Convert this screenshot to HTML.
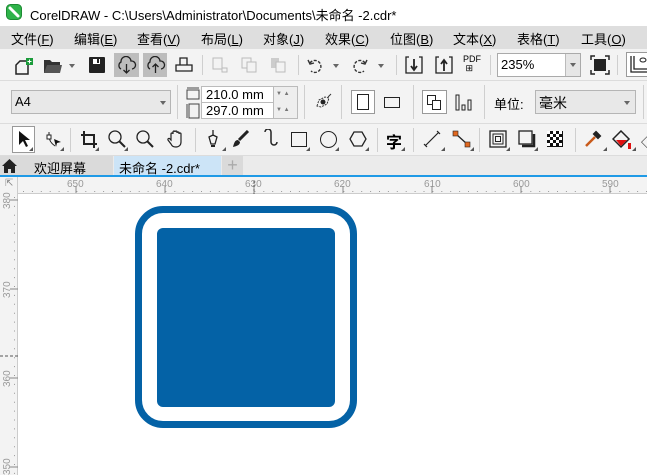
<!DOCTYPE html>
<html><head><meta charset="utf-8"><style>
*{margin:0;padding:0;box-sizing:border-box}
body{width:647px;height:475px;overflow:hidden;background:#fff;font-family:"Liberation Sans","Noto Sans CJK SC",sans-serif;font-size:12px;color:#000;position:relative}
.a{position:absolute}
.sep{position:absolute;width:1px;background:#cfcfcf}
.hl{position:absolute;height:1px;background:#dcdcdc;left:0;width:647px}
.ic{position:absolute;font-size:16px;line-height:16px}
.tri{position:absolute;width:0;height:0;border-left:3px solid transparent;border-right:3px solid transparent;border-top:4px solid #666}
.sm{position:absolute;width:0;height:0;border-left:4px solid transparent;border-bottom:4px solid #555}
</style></head><body>
<!-- title -->
<div class="a" style="left:0;top:0;width:647px;height:26px;background:#fff"></div>
<svg class="a" style="left:6px;top:4px" width="16" height="16"><rect x="0.5" y="0.5" width="15" height="15" rx="4" fill="#2fb34a" stroke="#1d8a33"/><path d="M4 4 L12 12" stroke="#fff" stroke-width="3" stroke-linecap="round"/></svg>
<div class="a" style="left:30px;top:5px;font-size:13px">CorelDRAW - C:\Users\Administrator\Documents\未命名 -2.cdr*</div>
<!-- menu -->
<div class="a" style="left:0;top:26px;width:647px;height:23px;background:#dedede"></div>
<div class="a" style="top:29px;left:11px;font-size:13px;word-spacing:0">文件(<u>F</u>)</div>
<div class="a" style="top:29px;left:74px;font-size:13px">编辑(<u>E</u>)</div>
<div class="a" style="top:29px;left:137px;font-size:13px">查看(<u>V</u>)</div>
<div class="a" style="top:29px;left:201px;font-size:13px">布局(<u>L</u>)</div>
<div class="a" style="top:29px;left:263px;font-size:13px">对象(<u>J</u>)</div>
<div class="a" style="top:29px;left:325px;font-size:13px">效果(<u>C</u>)</div>
<div class="a" style="top:29px;left:390px;font-size:13px">位图(<u>B</u>)</div>
<div class="a" style="top:29px;left:453px;font-size:13px">文本(<u>X</u>)</div>
<div class="a" style="top:29px;left:517px;font-size:13px">表格(<u>T</u>)</div>
<div class="a" style="top:29px;left:581px;font-size:13px">工具(<u>O</u>)</div>
<!-- toolbars bg -->
<div class="a" style="left:0;top:49px;width:647px;height:107px;background:#f3f3f3"></div>
<div class="hl" style="top:80px"></div>
<div class="hl" style="top:123px"></div>
<div class="hl" style="top:155px"></div>
<!-- toolbar 1 -->
<svg class="a" style="left:14px;top:56px" width="20" height="20"><path d="M6 5 L14 5 L14 18 L2 18 L2 9 Z" fill="none" stroke="#222" stroke-width="1.5"/><rect x="12" y="2" width="7" height="7" fill="#1a9b3a"/><path d="M15.5 3.5v4M13.5 5.5h4" stroke="#fff"/></svg>
<svg class="a" style="left:43px;top:57px" width="20" height="18"><path d="M1 3h6l2 2h8v11H1z" fill="#333"/><path d="M4 8h15l-2 8H1z" fill="#555"/></svg>
<div class="tri" style="left:69px;top:64px"></div>
<svg class="a" style="left:88px;top:56px" width="18" height="18"><rect x="1" y="1" width="16" height="16" rx="1" fill="#222"/><rect x="5" y="3" width="7" height="5" fill="#fff"/><rect x="9" y="3" width="2" height="4" fill="#222"/></svg>
<div class="a" style="left:114px;top:53px;width:25px;height:24px;background:#bdbdbd"></div>
<div class="a" style="left:143px;top:53px;width:24px;height:24px;background:#bdbdbd"></div>
<svg class="a" style="left:116px;top:56px" width="21" height="18"><path d="M5 13 A4 4 0 0 1 5 6 A5 5 0 0 1 15 5 A4 4 0 0 1 16 13" fill="none" stroke="#222" stroke-width="1.3"/><path d="M10.5 8v9M7.5 14l3 3 3-3" fill="none" stroke="#222" stroke-width="1.3"/></svg>
<svg class="a" style="left:145px;top:56px" width="21" height="18"><path d="M5 13 A4 4 0 0 1 5 6 A5 5 0 0 1 15 5 A4 4 0 0 1 16 13" fill="none" stroke="#222" stroke-width="1.3"/><path d="M10.5 17v-9M7.5 11l3-3 3 3" fill="none" stroke="#222" stroke-width="1.3"/></svg>
<svg class="a" style="left:175px;top:56px" width="18" height="18"><path d="M5 9V2h7v7M1 9h16v6H1z" fill="none" stroke="#222" stroke-width="1.3"/></svg>
<div class="sep" style="left:202px;top:55px;height:20px"></div>
<svg class="a" style="left:212px;top:57px" width="16" height="16"><rect x="1" y="1" width="9" height="11" fill="none" stroke="#bbb"/><rect x="10" y="11" width="5" height="4" fill="none" stroke="#bbb"/></svg>
<svg class="a" style="left:241px;top:57px" width="16" height="16"><rect x="1" y="1" width="9" height="10" fill="none" stroke="#bbb"/><rect x="6" y="5" width="9" height="10" fill="#f3f3f3" stroke="#bbb"/></svg>
<svg class="a" style="left:270px;top:57px" width="16" height="16"><rect x="1" y="1" width="8" height="10" fill="#ccc"/><rect x="6" y="5" width="9" height="10" fill="#f3f3f3" stroke="#bbb"/></svg>
<div class="sep" style="left:298px;top:55px;height:20px"></div>
<svg class="a" style="left:306px;top:57px" width="18" height="18"><path d="M4 6 A6 6 0 1 1 5 14" fill="none" stroke="#333" stroke-width="1.4" stroke-dasharray="3 1.5"/><path d="M2 3 L4 7 L8 6" fill="none" stroke="#333" stroke-width="1.4"/></svg>
<div class="tri" style="left:333px;top:64px"></div>
<svg class="a" style="left:351px;top:57px" width="18" height="18"><path d="M14 6 A6 6 0 1 0 13 14" fill="none" stroke="#333" stroke-width="1.4" stroke-dasharray="3 1.5"/><path d="M16 3 L14 7 L10 6" fill="none" stroke="#333" stroke-width="1.4"/></svg>
<div class="tri" style="left:378px;top:64px"></div>
<div class="sep" style="left:396px;top:55px;height:20px"></div>
<svg class="a" style="left:405px;top:56px" width="18" height="18"><path d="M4 1H1v16h16V1h-3" fill="none" stroke="#222" stroke-width="1.3"/><path d="M9 3v10M6 10l3 4 3-4" fill="none" stroke="#222" stroke-width="1.8"/></svg>
<svg class="a" style="left:435px;top:56px" width="18" height="18"><path d="M4 1H1v16h16V1h-3" fill="none" stroke="#222" stroke-width="1.3"/><path d="M9 15V5M6 8l3-4 3 4" fill="none" stroke="#222" stroke-width="1.8"/></svg>
<div class="a" style="left:463px;top:55px;font-size:9px;line-height:9px">PDF<br>&nbsp;⊞</div>
<div class="sep" style="left:490px;top:55px;height:20px"></div>
<div class="a" style="left:497px;top:53px;width:84px;height:24px;border:1px solid #aaa;background:#fff"></div>
<div class="a" style="left:565px;top:54px;width:15px;height:22px;background:#e6e6e6;border-left:1px solid #bbb"></div>
<div class="tri" style="left:570px;top:63px"></div>
<div class="a" style="left:501px;top:57px;font-size:13px">235%</div>
<svg class="a" style="left:590px;top:55px" width="20" height="20"><path d="M1 5V1h4M15 1h4v4M19 15v4h-4M5 19H1v-4" fill="none" stroke="#222" stroke-width="1.5"/><rect x="4" y="4" width="12" height="12" fill="#222"/></svg>
<div class="sep" style="left:617px;top:55px;height:20px"></div>
<div class="a" style="left:626px;top:52px;width:25px;height:25px;border:1px solid #999;background:#fff"></div>
<svg class="a" style="left:629px;top:55px" width="18" height="18"><path d="M2 1v16h16M5 1v13h13" fill="none" stroke="#222" stroke-width="1.3"/><ellipse cx="14" cy="5" rx="3" ry="2" fill="none" stroke="#222"/></svg>
<!-- toolbar 2 -->
<div class="a" style="left:11px;top:90px;width:160px;height:24px;border:1px solid #b5b5b5;background:#e8e8e8"></div>
<div class="a" style="left:15px;top:94px;font-size:13px">A4</div>
<div class="tri" style="left:160px;top:101px"></div>
<div class="sep" style="left:177px;top:85px;height:34px"></div>
<svg class="a" style="left:186px;top:87px" width="14" height="32"><path d="M1 1h12M1 3h12v9H1z" fill="none" stroke="#444"/><path d="M1 17v14M3 17h10v14H3z" fill="none" stroke="#444"/></svg>
<div class="a" style="left:201px;top:86px;width:73px;height:17px;border:1px solid #bbb;background:#fff;font-size:13px;padding-left:4px;line-height:15px">210.0 mm</div>
<div class="a" style="left:201px;top:102px;width:73px;height:17px;border:1px solid #bbb;background:#fff;font-size:13px;padding-left:4px;line-height:15px">297.0 mm</div>
<div class="a" style="left:273px;top:86px;width:25px;height:33px;border:1px solid #bbb;background:#eee"></div>
<div class="a" style="left:276px;top:91px;font-size:6px;color:#777">▼ ▲</div>
<div class="a" style="left:276px;top:107px;font-size:6px;color:#777">▼ ▲</div>
<div class="sep" style="left:304px;top:85px;height:34px"></div>
<svg class="a" style="left:314px;top:93px" width="18" height="18"><path d="M3 13L5 7 11 4 15 5 13 11 7 14z" fill="none" stroke="#333" stroke-dasharray="2 1"/><circle cx="9" cy="9" r="2.5" fill="#222"/><path d="M14 4l3-3" stroke="#333"/></svg>
<div class="sep" style="left:341px;top:85px;height:34px"></div>
<div class="a" style="left:351px;top:90px;width:24px;height:24px;border:1px solid #999;background:#fff"></div>
<div class="a" style="left:357px;top:94px;width:12px;height:16px;border:1.3px solid #222"></div>
<div class="a" style="left:384px;top:97px;width:16px;height:11px;border:1.3px solid #222"></div>
<div class="sep" style="left:413px;top:85px;height:34px"></div>
<div class="a" style="left:422px;top:90px;width:25px;height:24px;border:1px solid #999;background:#fff"></div>
<div class="a" style="left:427px;top:95px;width:9px;height:10px;border:1.2px solid #222"></div>
<div class="a" style="left:432px;top:100px;width:9px;height:10px;border:1.2px solid #222;background:#fff"></div>
<svg class="a" style="left:455px;top:94px" width="18" height="18"><rect x="1" y="1" width="3" height="15" fill="none" stroke="#222"/><rect x="7" y="11" width="3" height="5" fill="none" stroke="#222"/><rect x="13" y="6" width="3" height="10" fill="none" stroke="#222"/></svg>
<div class="sep" style="left:484px;top:85px;height:34px"></div>
<div class="a" style="left:494px;top:94px;font-size:13px">单位:</div>
<div class="a" style="left:535px;top:90px;width:101px;height:24px;border:1px solid #b5b5b5;background:#e8e8e8"></div>
<div class="a" style="left:539px;top:93px;font-size:14px">毫米</div>
<div class="tri" style="left:624px;top:101px"></div>
<div class="sep" style="left:643px;top:85px;height:34px"></div>
<!-- toolbox -->
<div class="a" style="left:12px;top:126px;width:23px;height:27px;border:1px solid #999;background:#fff"></div>
<svg class="a" style="left:17px;top:130px" width="14" height="18"><path d="M2 1v14l4-4 3 6 2-1-3-6h5z" fill="#111"/></svg>
<svg class="a" style="left:45px;top:130px" width="18" height="18"><path d="M4 2v4M4 6c0 5 3 8 6 10" fill="none" stroke="#222"/><rect x="2" y="5" width="4" height="4" fill="#fff" stroke="#222"/><path d="M9 9l7 3-4 1-1 4z" fill="#111"/></svg>
<div class="sep" style="left:70px;top:128px;height:24px"></div>
<svg class="a" style="left:80px;top:130px" width="18" height="18"><path d="M4 1v13h13M1 5h13v13" fill="none" stroke="#222" stroke-width="2"/></svg>
<svg class="a" style="left:108px;top:130px" width="18" height="18"><circle cx="7" cy="7" r="6" fill="none" stroke="#222" stroke-width="1.3"/><path d="M11 11l6 6" stroke="#222" stroke-width="2"/></svg>
<svg class="a" style="left:136px;top:130px" width="18" height="18"><circle cx="7" cy="7" r="6" fill="none" stroke="#222" stroke-width="1.3"/><path d="M11 11l6 6" stroke="#222" stroke-width="2"/></svg>
<svg class="a" style="left:166px;top:129px" width="20" height="20"><path d="M5 11V5a1 1 0 0 1 2 0V3a1 1 0 0 1 2 0v0a1 1 0 0 1 2 0v1a1 1 0 0 1 2 0v1a1 1 0 0 1 2 0v8c0 3-2 5-5 5s-4-1-5-3l-3-4a1 1 0 0 1 2-1z" fill="none" stroke="#222" stroke-width="1.2"/></svg>
<div class="sep" style="left:195px;top:128px;height:24px"></div>
<svg class="a" style="left:205px;top:129px" width="16" height="20"><path d="M8 1v6M4 8l4-2 4 2-2 7H6z" fill="none" stroke="#222" stroke-width="1.3"/><path d="M6 16h4v2H6z" fill="#222"/></svg>
<svg class="a" style="left:232px;top:130px" width="18" height="18"><path d="M16 1L7 10" stroke="#222" stroke-width="3"/><path d="M6 10c-3 0-4 3-5 7 4-1 7-2 7-5z" fill="#222"/></svg>
<svg class="a" style="left:262px;top:129px" width="16" height="20"><path d="M3 3a3 3 0 0 1 6 0v10a3 3 0 0 0 6 0" fill="none" stroke="#222" stroke-width="1.5"/></svg>
<div class="a" style="left:291px;top:132px;width:16px;height:15px;border:1.3px solid #222"></div>
<div class="a" style="left:320px;top:131px;width:17px;height:17px;border:1.3px solid #222;border-radius:50%"></div>
<svg class="a" style="left:349px;top:130px" width="18" height="18"><path d="M5 2h8l4 7-4 7H5L1 9z" fill="none" stroke="#222" stroke-width="1.3"/></svg>
<div class="sep" style="left:377px;top:128px;height:24px"></div>
<div class="a" style="left:386px;top:129px;font-size:16px;font-weight:bold">字</div>
<div class="sep" style="left:413px;top:128px;height:24px"></div>
<svg class="a" style="left:423px;top:130px" width="18" height="18"><path d="M2 16L16 2M1 14l3 3M14 1l3 3" stroke="#222" stroke-width="1.2"/></svg>
<svg class="a" style="left:452px;top:130px" width="20" height="20"><path d="M4 4l11 10" stroke="#222" stroke-width="1.3"/><rect x="1" y="1" width="5" height="5" fill="#e0681f" stroke="#222" stroke-width=".6"/><rect x="13" y="12" width="5" height="5" fill="#e0681f" stroke="#222" stroke-width=".6"/></svg>
<div class="sep" style="left:479px;top:128px;height:24px"></div>
<svg class="a" style="left:489px;top:130px" width="18" height="18"><rect x="1" y="1" width="16" height="16" fill="none" stroke="#222" stroke-width="1.3"/><rect x="4" y="4" width="10" height="10" fill="none" stroke="#222"/><rect x="6.5" y="6.5" width="5" height="5" fill="none" stroke="#222"/></svg>
<svg class="a" style="left:518px;top:130px" width="18" height="18"><rect x="1" y="1" width="13" height="13" fill="none" stroke="#222" stroke-width="1.3"/><path d="M16 4v12H4" fill="none" stroke="#222" stroke-width="2.5"/></svg>
<svg class="a" style="left:547px;top:131px" width="16" height="16"><rect width="16" height="16" fill="#111"/><g fill="#fff"><rect x="0" y="0" width="3" height="3"/><rect x="6" y="0" width="3" height="3"/><rect x="12" y="0" width="3" height="3"/><rect x="3" y="3" width="3" height="3"/><rect x="9" y="3" width="3" height="3"/><rect x="0" y="6" width="3" height="3"/><rect x="6" y="6" width="3" height="3"/><rect x="12" y="6" width="3" height="3"/><rect x="3" y="9" width="3" height="3"/><rect x="9" y="9" width="3" height="3"/><rect x="0" y="12" width="3" height="3"/><rect x="6" y="12" width="3" height="3"/><rect x="12" y="12" width="3" height="3"/></g></svg>
<div class="sep" style="left:575px;top:128px;height:24px"></div>
<svg class="a" style="left:584px;top:130px" width="18" height="18"><path d="M2 16l9-9" stroke="#c85a1a" stroke-width="2.5"/><path d="M10 4l4 4M12 2l4 4-2 2-4-4z" stroke="#222" stroke-width="2" fill="#222"/></svg>
<svg class="a" style="left:612px;top:130px" width="20" height="20"><path d="M9 1L17 9 9 17 1 9z" fill="none" stroke="#222" stroke-width="1.5"/><path d="M4 10h11l-6 6z" fill="#e01010"/><path d="M16 13h3v6h-3z" fill="#e01010"/></svg>
<div class="a" style="left:641px;top:132px;font-size:13px">◇</div>
<!-- small triangles -->
<div class="sm" style="left:29px;top:147px"></div><div class="sm" style="left:60px;top:147px"></div><div class="sm" style="left:95px;top:147px"></div><div class="sm" style="left:124px;top:147px"></div><div class="sm" style="left:222px;top:147px"></div><div class="sm" style="left:306px;top:147px"></div><div class="sm" style="left:335px;top:147px"></div><div class="sm" style="left:365px;top:147px"></div><div class="sm" style="left:401px;top:147px"></div><div class="sm" style="left:441px;top:147px"></div><div class="sm" style="left:470px;top:147px"></div><div class="sm" style="left:506px;top:147px"></div><div class="sm" style="left:534px;top:147px"></div><div class="sm" style="left:603px;top:147px"></div><div class="sm" style="left:632px;top:147px"></div>
<!-- tabs -->
<div class="a" style="left:0;top:156px;width:647px;height:20px;background:#ebebeb"></div>
<div class="a" style="left:0;top:156px;width:113px;height:20px;background:#dadada"></div>
<svg class="a" style="left:1px;top:158px" width="17" height="16"><path d="M8.5 1L1 8h2v7h4v-4h3v4h4V8h2z" fill="#222"/></svg>
<div class="a" style="left:34px;top:158px;font-size:13px">欢迎屏幕</div>
<div class="a" style="left:114px;top:156px;width:107px;height:20px;background:#cce4f7"></div>
<div class="a" style="left:119px;top:158px;font-size:13px">未命名 -2.cdr*</div>
<div class="a" style="left:222px;top:156px;width:21px;height:20px;background:#dadada;color:#aaa;font-size:18px;line-height:19px;text-align:center">+</div>
<div class="a" style="left:0;top:175px;width:647px;height:2px;background:#1f9ae6"></div>
<!-- rulers -->
<div class="a" style="left:0;top:177px;width:647px;height:17px;background:#f3f3f3;border-bottom:1px solid #ccc"></div>
<div class="a" style="left:0;top:177px;width:18px;height:298px;background:#f3f3f3;border-right:1px solid #ccc"></div>
<div class="a" style="left:5px;top:178px;font-size:10px;color:#888">⇱</div>
<svg class="a" style="left:0;top:177px" width="647" height="298" style="font-family:Liberation Sans">
<g fill="#999" font-size="10" font-family="Liberation Sans">
<text x="67" y="10">650</text><text x="156" y="10">640</text><text x="245" y="10">630</text><text x="334" y="10">620</text><text x="424" y="10">610</text><text x="513" y="10">600</text><text x="602" y="10">590</text>
</g>
<g stroke="#888">
<path d="M76 9v7M165 9v7M254 9v7M343 9v7M432 9v7M521 9v7M610 9v7"/>
</g>
<g stroke="#999" stroke-dasharray="1 7.9">
<path d="M23 14.5H647"/>
<path d="M14.5 20V298"/>
</g>
<path d="M254 4v13" stroke="#555" stroke-dasharray="2 2"/>
<path d="M0 179h18" stroke="#555" stroke-dasharray="3 2"/>
<path d="M10 23h8M10 112h8M10 201h8M10 290h8" stroke="#888"/>
<g fill="#999" font-size="10" font-family="Liberation Sans">
<text transform="translate(10,32) rotate(-90)">380</text>
<text transform="translate(10,121) rotate(-90)">370</text>
<text transform="translate(10,210) rotate(-90)">360</text>
<text transform="translate(10,298) rotate(-90)">350</text>
</g>
</svg>
<!-- canvas shape -->
<div class="a" style="left:135px;top:206px;width:222px;height:222px;border:7px solid #0462a6;border-radius:28px"></div>
<div class="a" style="left:157px;top:228px;width:178px;height:179px;background:#0462a6;border-radius:6px"></div>
</body></html>
